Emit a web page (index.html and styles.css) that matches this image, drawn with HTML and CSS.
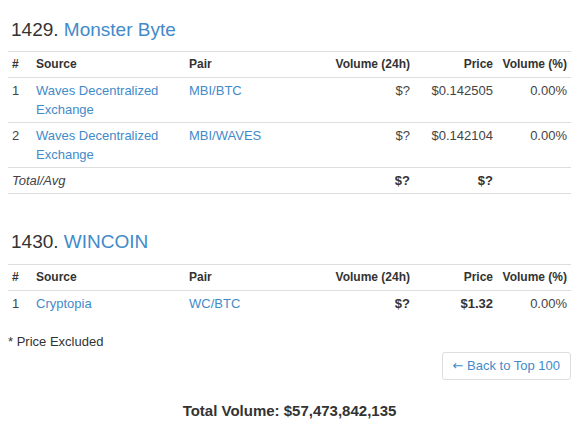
FILE: index.html
```html
<!DOCTYPE html>
<html>
<head>
<meta charset="utf-8">
<link rel="stylesheet" href="styles.css">
</head>
<body>
<div class="page">
  <section class="coin">
    <h2 class="coin-title">1429. <a href="#">Monster Byte</a></h2>
    <table class="markets">
      <colgroup>
        <col class="c-num"><col class="c-src"><col class="c-pair"><col class="c-vol"><col class="c-price"><col class="c-pct">
      </colgroup>
      <thead>
        <tr><th>#</th><th>Source</th><th>Pair</th><th class="r">Volume (24h)</th><th class="r">Price</th><th class="r">Volume (%)</th></tr>
      </thead>
      <tbody>
        <tr><td>1</td><td><a href="#">Waves Decentralized Exchange</a></td><td><a href="#">MBI/BTC</a></td><td class="r">$?</td><td class="r">$0.142505</td><td class="r">0.00%</td></tr>
        <tr><td>2</td><td><a href="#">Waves Decentralized Exchange</a></td><td><a href="#">MBI/WAVES</a></td><td class="r">$?</td><td class="r">$0.142104</td><td class="r">0.00%</td></tr>
        <tr class="total"><td colspan="3"><em>Total/Avg</em></td><td class="r b">$?</td><td class="r b">$?</td><td></td></tr>
      </tbody>
    </table>
  </section>

  <section class="coin second">
    <h2 class="coin-title">1430. <a href="#">WINCOIN</a></h2>
    <table class="markets open">
      <colgroup>
        <col class="c-num"><col class="c-src"><col class="c-pair"><col class="c-vol"><col class="c-price"><col class="c-pct">
      </colgroup>
      <thead>
        <tr><th>#</th><th>Source</th><th>Pair</th><th class="r">Volume (24h)</th><th class="r">Price</th><th class="r">Volume (%)</th></tr>
      </thead>
      <tbody>
        <tr><td>1</td><td><a href="#">Cryptopia</a></td><td><a href="#">WC/BTC</a></td><td class="r b">$?</td><td class="r b">$1.32</td><td class="r">0.00%</td></tr>
      </tbody>
    </table>
  </section>

  <p class="note">* Price Excluded</p>
  <div class="actions"><a class="btn" href="#"><span class="arrow">←</span> Back to Top 100</a></div>
  <p class="grand-total">Total Volume: $57,473,842,135</p>
</div>
</body>
</html>
```
FILE: styles.css
```css
html, body {
  margin: 0;
  padding: 0;
  background: #fff;
}
body {
  font-family: "Liberation Sans", Arial, sans-serif;
  font-size: 13px;
  line-height: 19px;
  color: #333;
}
a {
  color: #428bca;
  text-decoration: none;
}
.page {
  padding: 19px 12px 0 8px;
}
.coin-title {
  margin: 0 0 11px 0;
  padding-left: 3px;
  font-size: 19px;
  line-height: 21px;
  font-weight: normal;
  color: #333;
}
.second {
  margin-top: 37px;
}
.second .coin-title {
  margin-bottom: 12px;
}
.markets {
  width: 563px;
  table-layout: fixed;
  border-collapse: collapse;
  border-spacing: 0;
}
.c-num { width: 24px; }
.c-src { width: 153px; }
.c-pair { width: 145px; }
.c-vol { width: 84px; }
.c-price { width: 83px; }
.c-pct { width: 74px; }
.markets th,
.markets td {
  padding: 3px 4px;
  border-top: 1px solid #ddd;
  text-align: left;
  vertical-align: top;
}
.markets th {
  font-size: 12px;
  font-weight: bold;
  color: #333;
  white-space: nowrap;
}
.markets td {
  color: #444;
}
.markets tbody tr:last-child td {
  border-bottom: 1px solid #ddd;
}
.markets.open tbody tr:last-child td {
  border-bottom: none;
}
.markets .r {
  text-align: right;
}
.markets .b {
  font-weight: bold;
  color: #333;
}
.total em {
  font-style: italic;
}
.note {
  margin: 16px 0 1px 0;
  color: #333;
}
.actions {
  display: flex;
  justify-content: flex-end;
}
.btn {
  display: inline-block;
  padding: 4px 10px 4px 9px;
  line-height: 18px;
  border: 1px solid #ddd;
  border-radius: 3px;
  color: #428bca;
  font-size: 13px;
}
.arrow {
  font-family: "DejaVu Sans", sans-serif;
  font-size: 13px;
}
.grand-total {
  margin: 20px 0 0 0;
  text-align: center;
  font-weight: bold;
  font-size: 15px;
  line-height: 21px;
  color: #333;
}
```
